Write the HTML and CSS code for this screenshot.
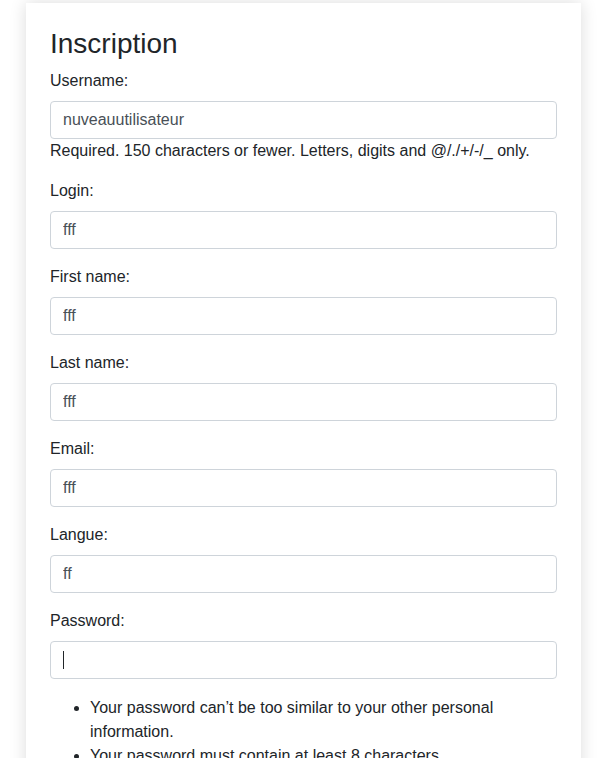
FILE: index.html
```html
<!DOCTYPE html>
<html lang="fr">
<head>
<meta charset="utf-8">
<title>Inscription</title>
<link rel="stylesheet" href="styles.css">
</head>
<body>
<div class="card">
  <h3 class="title">Inscription</h3>
  <form class="form">
    <div class="group tight">
      <label class="label">Username:</label>
      <input class="control" type="text" value="nuveauutilisateur">
      <div class="help">Required. 150 characters or fewer. Letters, digits and @/./+/-/_ only.</div>
    </div>
    <div class="group">
      <label class="label">Login:</label>
      <input class="control" type="text" value="fff">
    </div>
    <div class="group">
      <label class="label">First name:</label>
      <input class="control" type="text" value="fff">
    </div>
    <div class="group">
      <label class="label">Last name:</label>
      <input class="control" type="text" value="fff">
    </div>
    <div class="group">
      <label class="label">Email:</label>
      <input class="control" type="text" value="fff">
    </div>
    <div class="group">
      <label class="label">Langue:</label>
      <input class="control" type="text" value="ff">
    </div>
    <div class="group">
      <label class="label">Password:</label>
      <div class="field">
        <input class="control" type="password" value="">
        <span class="caret"></span>
      </div>
    </div>
    <ul class="rules">
      <li>Your password can’t be too similar to your other personal information.</li>
      <li>Your password must contain at least 8 characters.</li>
    </ul>
  </form>
</div>
</body>
</html>
```

FILE: styles.css
```css
* { box-sizing: border-box; }
html, body { margin: 0; padding: 0; background: #fff; }
body {
  font-family: "Liberation Sans", Arial, sans-serif;
  font-size: 16px;
  line-height: 1.5;
  color: #212529;
  overflow: hidden;
}
.card {
  margin: 3px 28px 0 26px;
  padding: 24px 24px 24px 24px;
  background: #fff;
  box-shadow: 0 0 16px rgba(0, 0, 0, 0.14);
}
.title {
  margin: 0 0 8px 0;
  font-size: 28px;
  font-weight: 500;
  line-height: 1.2;
}
.form { margin: 0; }
.group { margin-bottom: 16px; }
.label {
  display: inline-block;
  margin-bottom: 8px;
}
.control {
  display: block;
  width: 100%;
  height: 38px;
  padding: 6px 12px;
  font-family: inherit;
  font-size: 16px;
  line-height: 1.5;
  color: #495057;
  background: #fff;
  border: 1px solid #ced4da;
  border-radius: 4px;
  outline: none;
}
.help { color: #212529; }
.field { position: relative; }
.caret {
  position: absolute;
  left: 13px;
  top: 10px;
  width: 1px;
  height: 18px;
  background: #212529;
}
.rules {
  margin: 0;
  padding: 1px 0 0 40px;
}
```
